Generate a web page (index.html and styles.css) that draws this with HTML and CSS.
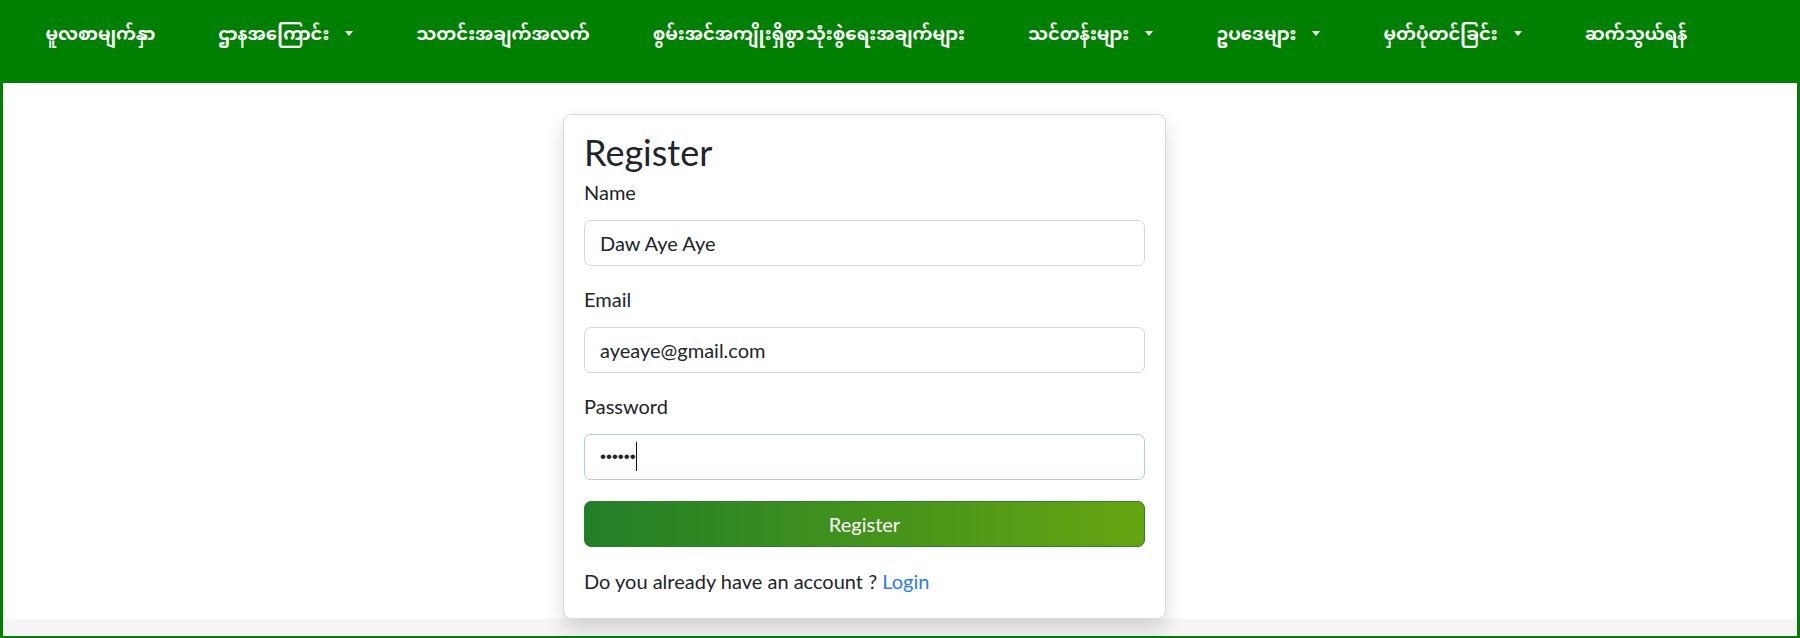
FILE: index.html
```html
<html>
    <head>
        <title>Register</title>
        <link rel="stylesheet" href="styles.css">
    </head>
    <body>
        <div class="page">
            <!--Menu principal-->
            <nav class="topnav">
                <ul class="menu">
                    <li><a href="#">မူလစာမျက်နှာ</a></li>
                    <li><a href="#" class="toggle">ဌာနအကြောင်း</a></li>
                    <li><a href="#">သတင်းအချက်အလက်</a></li>
                    <li><a href="#">စွမ်းအင်အကျိုးရှိစွာ သုံးစွဲရေးအချက်များ</a></li>
                    <li><a href="#" class="toggle">သင်တန်းများ</a></li>
                    <li><a href="#" class="toggle">ဥပဒေများ</a></li>
                    <li><a href="#" class="toggle">မှတ်ပုံတင်ခြင်း</a></li>
                    <li><a href="#">ဆက်သွယ်ရန်</a></li>
                </ul>
            </nav>
            <div class="main">
                <div class="card">
                    <h2 class="cardTitle">Register</h2>
                    <form action="" id="registro">
                        <div class="grupo">
                            <label for="nombreInput">Name</label>
                            <input type="text" id="nombreInput" class="campo" value="Daw Aye Aye">
                        </div>
                        <div class="grupo">
                            <label for="emailInput">Email</label>
                            <input type="email" id="emailInput" class="campo" value="ayeaye@gmail.com">
                        </div>
                        <div class="grupo">
                            <label for="passInput">Password</label>
                            <div class="campoWrap">
                                <input type="password" id="passInput" class="campo activo" value="123456">
                                <!--cursor de texto dibujado encima del campo-->
                                <span class="cursor"></span>
                            </div>
                        </div>
                        <button type="submit" class="boton">Register</button>
                    </form>
                    <p class="cuenta">Do you already have an account ? <a href="#">Login</a></p>
                </div>
            </div>
            <div class="barra"></div>
        </div>
    </body>
</html>
```

FILE: styles.css
```css
body
{
    margin: 0;
    font-family: Lato, "Noto Sans", sans-serif;
    color: #212529;
}
.page
{
    height: 638px;
    box-sizing: border-box;
    border: 3px solid #008000;
    border-top: 0;
    display: flex;
    flex-direction: column;
}
.topnav
{
    height: 83px;
    flex-shrink: 0;
    background-color: #008000;
}
.menu
{
    list-style: none;
    margin: 0;
    padding: 16px 0 0 11px;
    display: flex;
}
.menu a
{
    display: block;
    padding: 0 31.5px;
    line-height: 40px;
    color: #fff;
    font-family: "Noto Sans Myanmar", "Myanmar Text", Padauk, Pyidaungsu, "Noto Sans", sans-serif;
    font-weight: bold;
    font-size: 18px;
    word-spacing: -3px;
    text-decoration: none;
    white-space: nowrap;
}
.toggle::after
{
    content: "";
    display: inline-block;
    vertical-align: 4px;
    margin-left: 16px;
    border-top: 5px solid #fff;
    border-left: 4.5px solid transparent;
    border-right: 4.5px solid transparent;
}
.main
{
    flex: 1;
    background-color: #fff;
    padding: 31px 0 0 560px;
}
.card
{
    position: relative;
    z-index: 1;
    width: 603px;
    box-sizing: border-box;
    padding: 17px 20px 22px;
    background-color: #fff;
    border: 1px solid #d6d8da;
    border-radius: 8px;
    box-shadow: 0 10px 20px rgba(0, 0, 0, 0.15);
}
.cardTitle
{
    margin: 0 0 5px;
    font-size: 36px;
    line-height: 40px;
    font-weight: normal;
}
.grupo
{
    margin-bottom: 18px;
}
.grupo label
{
    display: block;
    font-size: 20px;
    line-height: 30px;
    margin-bottom: 13px;
}
.campo
{
    display: block;
    width: 100%;
    height: 46px;
    box-sizing: border-box;
    padding: 0 15px;
    font-family: Lato, "Noto Sans", sans-serif;
    font-size: 20px;
    color: #212529;
    border: 1px solid #d3d7db;
    border-radius: 7px;
    outline: none;
}
.activo
{
    font-family: "Liberation Sans", sans-serif;
    font-size: 17px;
    border-color: #b4c9e6;
}
.campoWrap
{
    position: relative;
}
.cursor
{
    position: absolute;
    left: 52px;
    top: 8px;
    width: 1px;
    height: 29px;
    background-color: #111;
}
.boton
{
    display: block;
    width: 100%;
    height: 46px;
    margin-top: 21px;
    font-family: Lato, "Noto Sans", sans-serif;
    font-size: 20px;
    color: #fff;
    background: linear-gradient(to right, #217f27, #66a511);
    border: 1px solid #2a7f2a;
    border-radius: 7px;
}
.cuenta
{
    margin: 19px 0 0;
    font-size: 20px;
    line-height: 30px;
}
.cuenta a
{
    color: #2a7af6;
    text-decoration: none;
}
.barra
{
    height: 17px;
    flex-shrink: 0;
    background-color: #f5f5f5;
}
```
